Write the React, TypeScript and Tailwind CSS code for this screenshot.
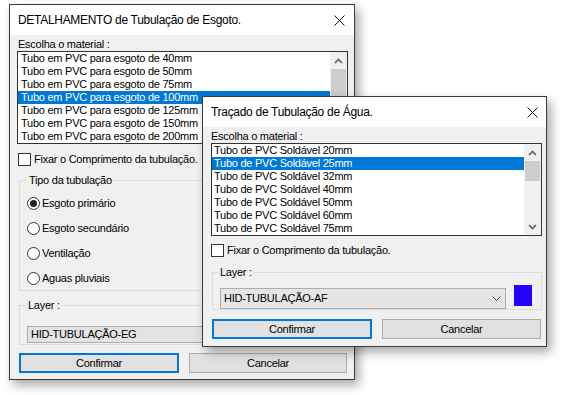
import React from "react";

const items1 = [
  "Tubo em PVC para esgoto de 40mm",
  "Tubo em PVC para esgoto de 50mm",
  "Tubo em PVC para esgoto de 75mm",
  "Tubo em PVC para esgoto de 100mm",
  "Tubo em PVC para esgoto de 125mm",
  "Tubo em PVC para esgoto de 150mm",
  "Tubo em PVC para esgoto de 200mm",
];

const items2 = [
  "Tubo de PVC Soldável 20mm",
  "Tubo de PVC Soldável 25mm",
  "Tubo de PVC Soldável 32mm",
  "Tubo de PVC Soldável 40mm",
  "Tubo de PVC Soldável 50mm",
  "Tubo de PVC Soldável 60mm",
  "Tubo de PVC Soldável 75mm",
];

function CloseX() {
  return (
    <svg width="11" height="11" viewBox="0 0 11 11">
      <path d="M0.5 0.5L10.5 10.5M10.5 0.5L0.5 10.5" stroke="#111" strokeWidth="1" />
    </svg>
  );
}

function Chevron({ up }: { up?: boolean }) {
  return (
    <svg width="9" height="6" viewBox="0 0 9 6">
      <path
        d={up ? "M1 5L4.5 1.5L8 5" : "M1 1L4.5 4.5L8 1"}
        stroke="#606060"
        strokeWidth="1.6"
        fill="none"
      />
    </svg>
  );
}

function ListBox({
  items,
  selected,
  thumbClass,
  padClass,
  widthClass,
}: {
  items: string[];
  selected: number;
  thumbClass: string;
  padClass: string;
  widthClass: string;
}) {
  return (
    <div className={`flex h-[93px] border border-[#333] bg-white ${widthClass}`}>
      <div className="flex-1 flex flex-col overflow-hidden">
        {items.map((it, i) => (
          <div
            key={it}
            className={`h-[13px] shrink-0 leading-[13px] whitespace-nowrap ${padClass} ${
              i === selected ? "bg-[#0078d7] text-white" : "text-black"
            }`}
          >
            {it}
          </div>
        ))}
      </div>
      <div className="w-[17px] bg-[#f0f0f0] flex flex-col">
        <div className="h-[17px] flex items-center justify-center">
          <Chevron up />
        </div>
        <div className={`mx-[1px] bg-[#cdcdcd] ${thumbClass}`} />
        <div className="flex-1" />
        <div className="h-[17px] flex items-center justify-center">
          <Chevron />
        </div>
      </div>
    </div>
  );
}

function CheckRow({ label, className }: { label: string; className: string }) {
  return (
    <div className={`h-[13px] flex items-center gap-[3px] ${className}`}>
      <div className="w-[13px] h-[13px] border border-[#333] bg-white shrink-0" />
      <span className="leading-[13px] whitespace-nowrap">{label}</span>
    </div>
  );
}

function Radio({ label, checked }: { label: string; checked?: boolean }) {
  return (
    <div className="h-[13px] flex items-center gap-[2px]">
      <div className="w-[13px] h-[13px] rounded-full border border-[#333] bg-white flex items-center justify-center shrink-0">
        {checked && <div className="w-[7px] h-[7px] rounded-full bg-[#222]" />}
      </div>
      <span className="leading-[13px] whitespace-nowrap">{label}</span>
    </div>
  );
}

function Button({ label, primary, className }: { label: string; primary?: boolean; className: string }) {
  return (
    <div
      className={`h-[20px] flex items-center justify-center bg-[#e1e1e1] ${
        primary ? "border-2 border-[#0078d7]" : "border border-[#adadad]"
      } ${className}`}
    >
      <span className="leading-[13px]">{label}</span>
    </div>
  );
}

export default function App() {
  return (
    <div className="relative w-[570px] h-[395px] bg-white overflow-hidden font-['Liberation_Sans',Arial,sans-serif] text-[11px] tracking-[-0.25px] text-black">
      {/* Window 1 */}
      <div className="absolute left-[9px] top-[4px] w-[346px] h-[376px] border border-[#3a3a3a] bg-[#f0f0f0] shadow-[4px_5px_10px_rgba(0,0,0,0.35)] flex flex-col">
        <div className="h-[30px] shrink-0 bg-white flex items-center justify-between pl-[8px] pr-[9px]">
          <span className="text-[12px] tracking-[-0.3px] whitespace-nowrap">
            DETALHAMENTO de Tubulação de Esgoto.
          </span>
          <CloseX />
        </div>
        <div className="flex flex-col">
          <div className="mt-[3px] ml-[8px] h-[13px] leading-[13px]">Escolha o material :</div>
          <div className="ml-[7px]">
            <ListBox
              items={items1}
              selected={3}
              thumbClass="h-[50px]"
              padClass="pl-[3px]"
              widthClass="w-[331px]"
            />
          </div>
          <CheckRow label="Fixar o Comprimento da tubulação." className="mt-[9px] ml-[8px]" />
          <fieldset className="mt-[7px] ml-[9px] w-[328px] min-w-0 border border-[#dcdcdc] pb-[5px]">
            <legend className="ml-[7px] px-[2px] leading-[14px]">Tipo da tubulação</legend>
            <div className="pt-[10px] pl-[7px] flex flex-col gap-[12px]">
              <Radio label="Esgoto primário" checked />
              <Radio label="Esgoto secundário" />
              <Radio label="Ventilação" />
              <Radio label="Aguas pluviais" />
            </div>
          </fieldset>
          <fieldset className="mt-[7px] ml-[9px] w-[328px] min-w-0 border border-[#dcdcdc] pb-[1px]">
            <legend className="ml-[6px] px-[2px] leading-[14px]">Layer :</legend>
            <div className="mt-[14px] ml-[7px] w-[300px] h-[17px] border border-[#adadad] bg-[#e3e3e3] pl-[3px] flex items-center">
              <span className="leading-[13px]">HID-TUBULAÇÃO-EG</span>
            </div>
          </fieldset>
          <div className="mt-[8px] ml-[9px] flex gap-[10px]">
            <Button label="Confirmar" primary className="w-[160px]" />
            <Button label="Cancelar" className="w-[158px]" />
          </div>
        </div>
      </div>

      {/* Window 2 */}
      <div className="absolute left-[202px] top-[96px] w-[345px] h-[251px] border border-[#3a3a3a] bg-[#f0f0f0] shadow-[4px_5px_10px_rgba(0,0,0,0.35)] flex flex-col">
        <div className="h-[30px] shrink-0 bg-white flex items-center justify-between pl-[8px] pr-[8px]">
          <span className="text-[12px] tracking-[-0.3px] whitespace-nowrap">
            Traçado de Tubulação de Água.
          </span>
          <CloseX />
        </div>
        <div className="flex flex-col">
          <div className="mt-[3px] ml-[8px] h-[13px] leading-[13px]">Escolha o material :</div>
          <div className="ml-[8px]">
            <ListBox
              items={items2}
              selected={1}
              thumbClass="h-[20px]"
              padClass="pl-[2px]"
              widthClass="w-[331px]"
            />
          </div>
          <CheckRow label="Fixar o Comprimento da tubulação." className="mt-[8px] ml-[8px]" />
          <fieldset className="mt-[8px] ml-[9px] w-[330px] min-w-0 border border-[#dcdcdc] pb-0">
            <legend className="ml-[6px] px-[1px] leading-[14px]">Layer :</legend>
            <div className="mt-[9px] ml-[7px] flex items-start">
              <div className="w-[286px] h-[21px] border border-[#adadad] bg-[#e5e5e5] pl-[3px] pr-[4px] flex items-center justify-between">
                <span className="leading-[13px]">HID-TUBULAÇÃO-AF</span>
                <svg width="9" height="5" viewBox="0 0 9 5">
                  <path d="M0.5 0.5L4.5 4.5L8.5 0.5" stroke="#444" strokeWidth="1" fill="none" />
                </svg>
              </div>
              <div className="ml-[8px] -mt-[3px] w-[18px] h-[21px] bg-[#2600ff]" />
            </div>
          </fieldset>
          <div className="mt-[9px] ml-[9px] flex gap-[10px]">
            <Button label="Confirmar" primary className="w-[160px]" />
            <Button label="Cancelar" className="w-[159px]" />
          </div>
        </div>
      </div>
    </div>
  );
}
